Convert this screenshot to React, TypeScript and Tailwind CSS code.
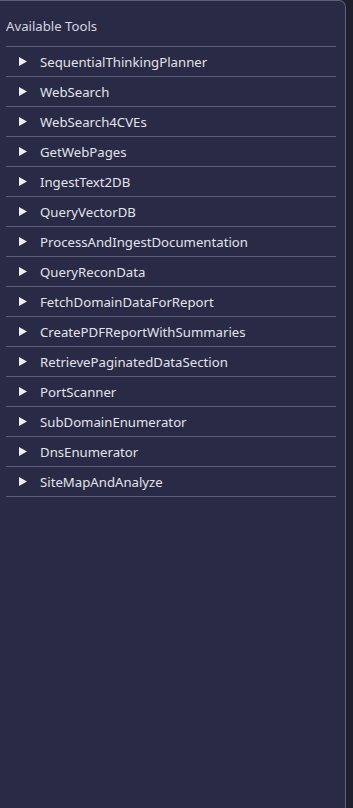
import React from "react";

const tools = [
  "SequentialThinkingPlanner",
  "WebSearch",
  "WebSearch4CVEs",
  "GetWebPages",
  "IngestText2DB",
  "QueryVectorDB",
  "ProcessAndIngestDocumentation",
  "QueryReconData",
  "FetchDomainDataForReport",
  "CreatePDFReportWithSummaries",
  "RetrievePaginatedDataSection",
  "PortScanner",
  "SubDomainEnumerator",
  "DnsEnumerator",
  "SiteMapAndAnalyze",
];

export default function App() {
  return (
    <div
      className="w-[353px] h-[808px] bg-[#1e1f2d] flex"
      style={{ fontFamily: '"Noto Sans", "Open Sans", sans-serif' }}
    >
      <div className="w-[346px] h-full bg-[#292a45] border-t border-r border-[#5c5e7a] rounded-tr-[7px] pl-[6px] pr-[9px]">
        <div className="h-[45px] pt-[16px] text-[13.2px] leading-[18px] text-[#d4d5e0]">
          Available Tools
        </div>
        <div className="border-t border-[#5a5c78]">
          {tools.map((t) => (
            <div
              key={t}
              className="h-[30px] border-b border-[#5a5c78] flex items-center pt-[2px] text-[13.2px] text-[#e2e3ea]"
            >
              <svg width="8" height="9" viewBox="0 0 8 9" className="ml-[13px] mr-[13px] -mt-[2px]">
                <path d="M0 0 L8 4.5 L0 9 Z" fill="#f0f0f4" />
              </svg>
              <span>{t}</span>
            </div>
          ))}
        </div>
      </div>
    </div>
  );
}
